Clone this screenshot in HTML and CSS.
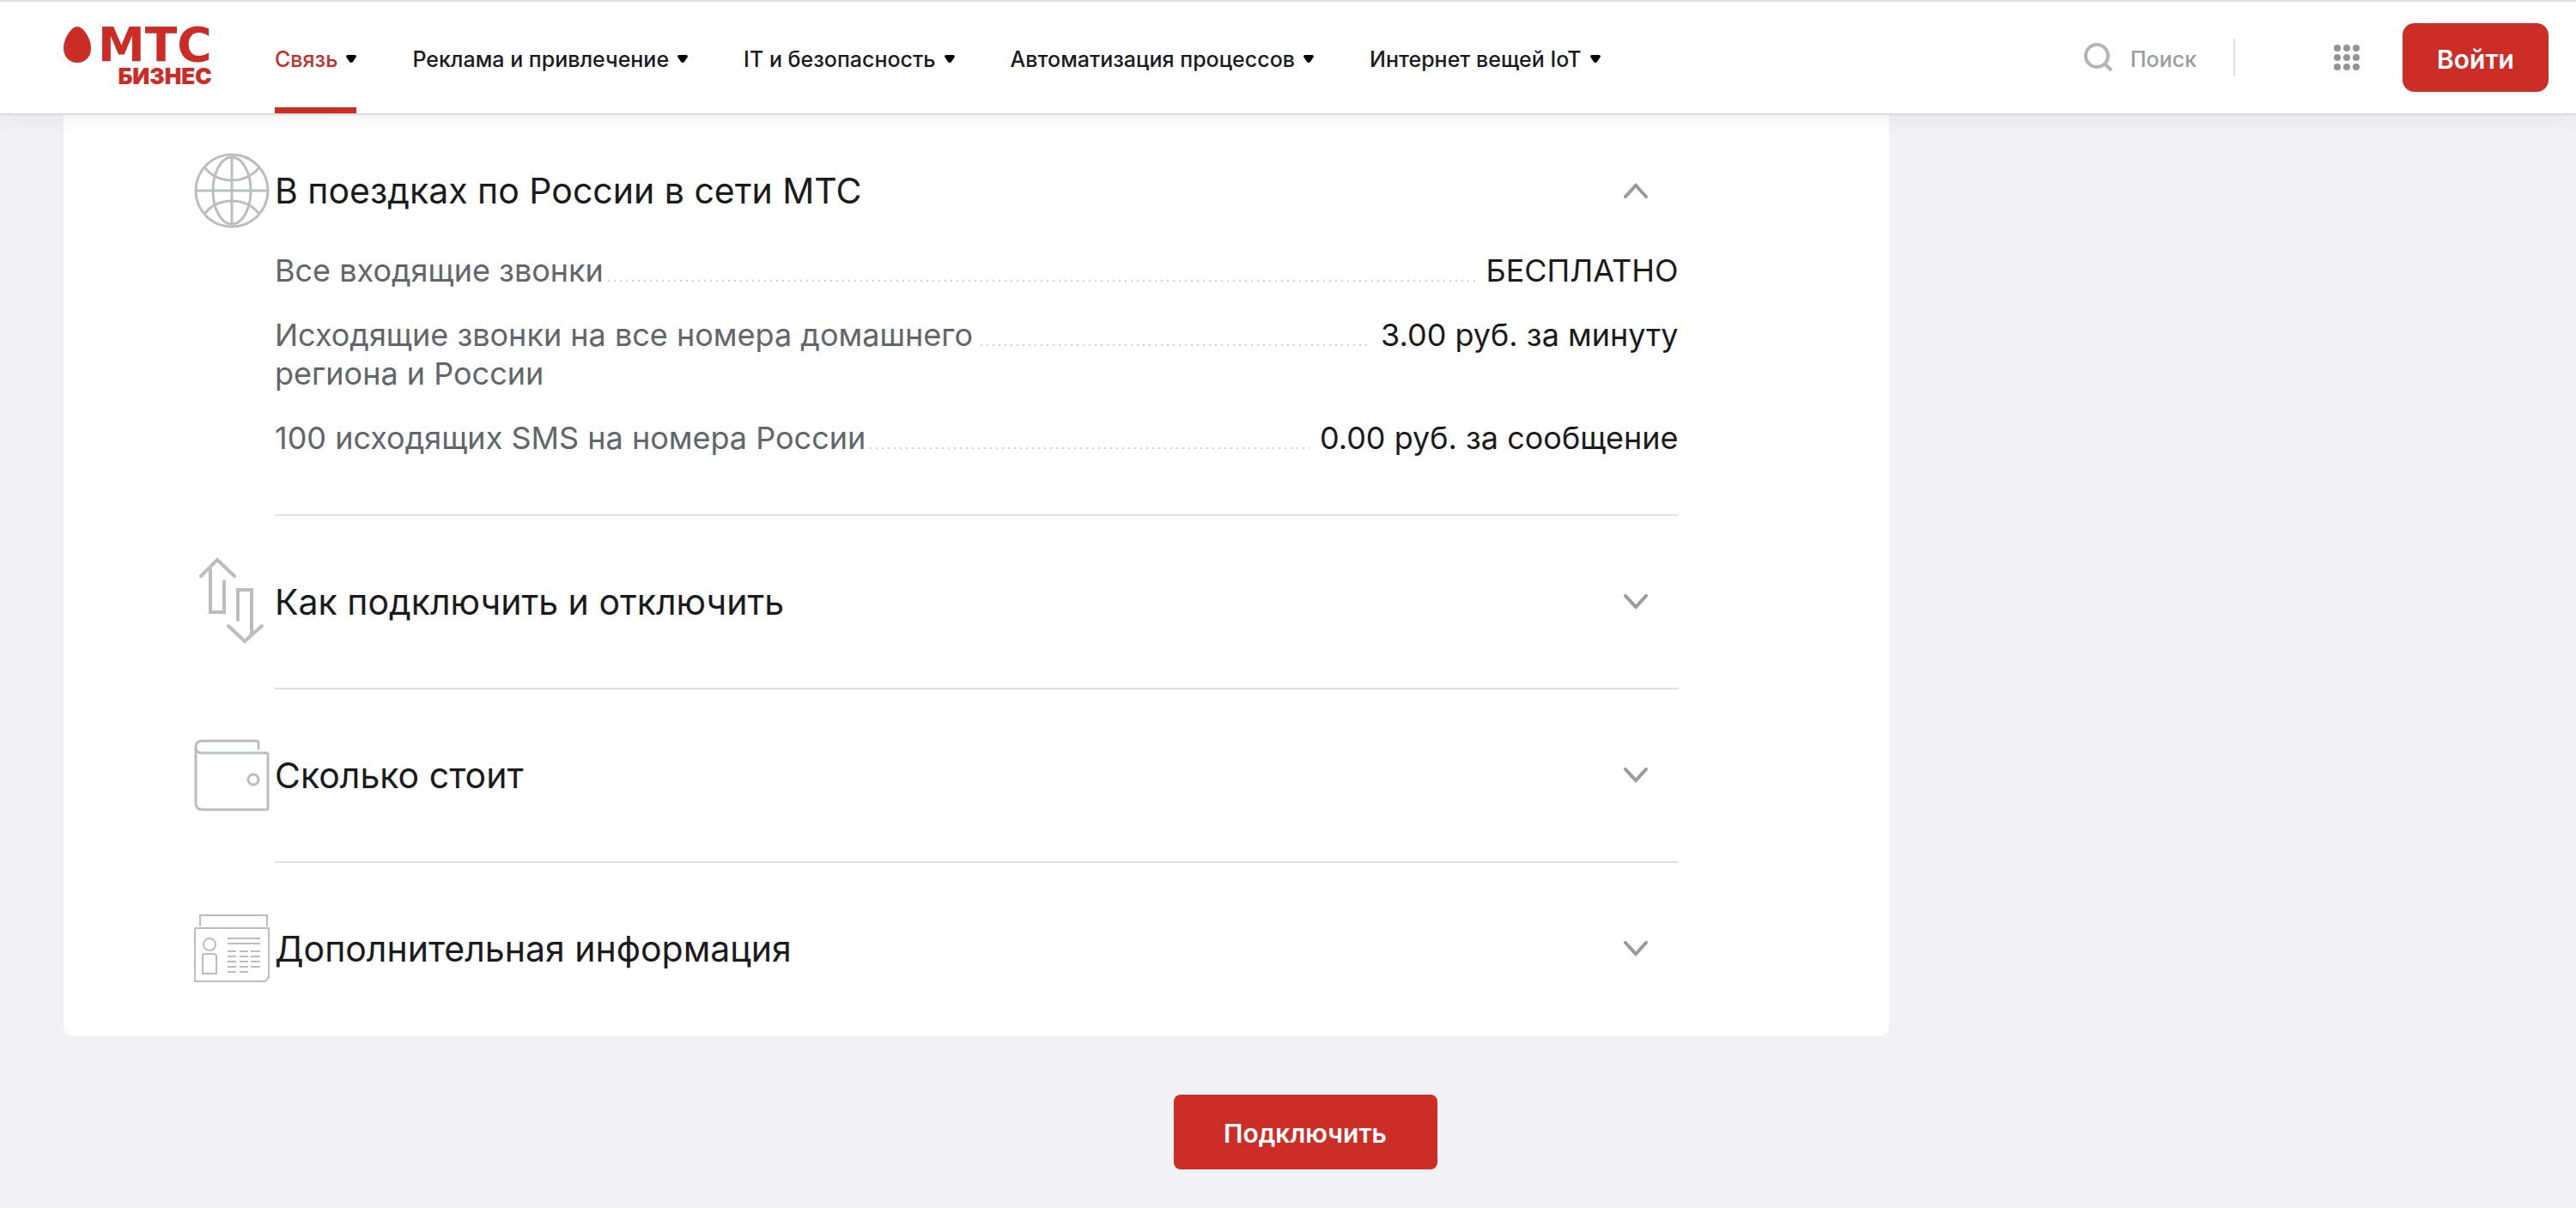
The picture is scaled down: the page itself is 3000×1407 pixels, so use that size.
FILE: index.html
```html
<!DOCTYPE html>
<html lang="ru">
<head>
    <meta charset="UTF-8">
    <meta name="viewport" content="width=device-width, initial-scale=1.0">
    <title>МТС Бизнес</title>
    <link rel="stylesheet" href="styles.css">
</head>
<body>
    <header class="header">
        <a href="#" class="logo">
            <svg class="logo-egg" viewBox="0 0 32 42" aria-hidden="true"><path d="M16 0C23 0 32 14 32 25c0 10-6.500 17-16 17S0 35 0 25C0 14 9 0 16 0z" fill="#cc2c26"/></svg>
            <span class="logo-text">
                <span class="logo-name">МТС</span>
                <span class="logo-sub">БИЗНЕС</span>
            </span>
        </a>
        <nav class="nav">
            <button type="button" class="nav-item active">Связь<svg class="caret" viewBox="0 0 12 9" aria-hidden="true"><path d="M2 0h8q2 0 2 2L8 8q-2 2-4 0L0 2q0-2 2-2z"/></svg></button>
            <button type="button" class="nav-item">Реклама и привлечение<svg class="caret" viewBox="0 0 12 9" aria-hidden="true"><path d="M2 0h8q2 0 2 2L8 8q-2 2-4 0L0 2q0-2 2-2z"/></svg></button>
            <button type="button" class="nav-item">IT и безопасность<svg class="caret" viewBox="0 0 12 9" aria-hidden="true"><path d="M2 0h8q2 0 2 2L8 8q-2 2-4 0L0 2q0-2 2-2z"/></svg></button>
            <button type="button" class="nav-item">Автоматизация процессов<svg class="caret" viewBox="0 0 12 9" aria-hidden="true"><path d="M2 0h8q2 0 2 2L8 8q-2 2-4 0L0 2q0-2 2-2z"/></svg></button>
            <button type="button" class="nav-item">Интернет вещей IoT<svg class="caret" viewBox="0 0 12 9" aria-hidden="true"><path d="M2 0h8q2 0 2 2L8 8q-2 2-4 0L0 2q0-2 2-2z"/></svg></button>
        </nav>
        <div class="tools">
            <label class="search">
                <svg class="search-icon" viewBox="0 0 34 34" aria-hidden="true"><circle cx="15" cy="15" r="13" /><path d="M24 24l8 8"/></svg>
                <input type="search" class="search-input" placeholder="Поиск" aria-label="Поиск">
            </label>
            <button type="button" class="apps" aria-label="Сервисы">
                <svg class="apps-icon" viewBox="0 0 30 30" aria-hidden="true">
                    <circle cx="4" cy="4" r="4"/><circle cx="15" cy="4" r="4"/><circle cx="26" cy="4" r="4"/>
                    <circle cx="4" cy="15" r="4"/><circle cx="15" cy="15" r="4"/><circle cx="26" cy="15" r="4"/>
                    <circle cx="4" cy="26" r="4"/><circle cx="15" cy="26" r="4"/><circle cx="26" cy="26" r="4"/>
                </svg>
            </button>
            <button type="button" class="btn btn-login">Войти</button>
        </div>
    </header>

    <main class="content">
        <div class="card">
            <section class="item open">
                <svg class="item-icon" viewBox="0 0 88 112" aria-hidden="true">
                    <g transform="translate(0 12)">
                        <circle cx="44" cy="44" r="42"/>
                        <ellipse cx="44" cy="44" rx="22" ry="39"/>
                        <path d="M44 5v78M4 44h80M13 18Q25 32 44 32T75 18M13 70Q25 56 44 56T75 70"/>
                    </g>
                </svg>
                <div class="item-body">
                    <button type="button" class="toggle" aria-expanded="true">В поездках по России в сети МТС
                        <svg class="chevron" viewBox="0 0 28 18" aria-hidden="true"><path d="M2 16L14 3l12 13"/></svg>
                    </button>
                    <dl class="rates">
                        <div class="rate">
                            <dt>Все входящие звонки</dt>
                            <dd>БЕСПЛАТНО</dd>
                        </div>
                        <div class="rate">
                            <dt>Исходящие звонки на все номера домашнего региона и России</dt>
                            <dd>3.00 руб. за минуту</dd>
                        </div>
                        <div class="rate">
                            <dt>100 исходящих SMS на номера России</dt>
                            <dd>0.00 руб. за сообщение</dd>
                        </div>
                    </dl>
                </div>
            </section>
            <section class="item">
                <svg class="item-icon bold" viewBox="0 0 88 200" aria-hidden="true">
                    <path d="M8 70L27 51l20 19M19 61v51h16V76M51 121V86h16v52M40 128l19 18 20-18"/>
                </svg>
                <div class="item-body">
                    <button type="button" class="toggle" aria-expanded="false">Как подключить и отключить
                        <svg class="chevron" viewBox="0 0 28 18" aria-hidden="true"><path d="M2 2l12 13L26 2"/></svg>
                    </button>
                </div>
            </section>
            <section class="item">
                <svg class="item-icon" viewBox="0 0 88 200" aria-hidden="true">
                    <path d="M75 69v-7q0-2-2-2H9q-7 0-7 7t7 7h75q2 0 2 2v62q0 2-2 2H10q-8 0-8-8V67"/>
                    <circle cx="69" cy="105" r="6"/>
                </svg>
                <div class="item-body">
                    <button type="button" class="toggle" aria-expanded="false">Сколько стоит
                        <svg class="chevron" viewBox="0 0 28 18" aria-hidden="true"><path d="M2 2l12 13L26 2"/></svg>
                    </button>
                </div>
            </section>
            <section class="item">
                <svg class="item-icon thin" viewBox="0 0 88 200" aria-hidden="true">
                    <path d="M7 74V61h78v13M1 76h86v57l-4 5H1z"/>
                    <circle cx="18" cy="95" r="7"/>
                    <path d="M13 106h10q3 0 3 3v20H10v-20q0-3 3-3z"/>
                    <path d="M39 88h38M39 94h38M39 103h10M53 103h10M66 103h11M39 109h10M53 109h10M66 109h11M39 115h10M53 115h10M66 115h11M39 121h10M53 121h10M66 121h11M39 127h10M53 127h10"/>
                </svg>
                <div class="item-body">
                    <button type="button" class="toggle" aria-expanded="false">Дополнительная информация
                        <svg class="chevron" viewBox="0 0 28 18" aria-hidden="true"><path d="M2 2l12 13L26 2"/></svg>
                    </button>
                </div>
            </section>
        </div>
        <button type="button" class="btn btn-connect">Подключить</button>
    </main>
</body>
</html>
```
FILE: styles.css
```css
* {
    box-sizing: border-box;
}
body {
    margin: 0;
    background: #f2f2f6;
    color: #1b1b1e;
    font-family: Inter, "Liberation Sans", sans-serif;
}
button {
    font-family: inherit;
    border: 0;
    padding: 0;
    background: none;
    color: inherit;
    cursor: pointer;
}
.header {
    position: relative;
    display: flex;
    align-items: center;
    height: 134px;
    padding: 0 32px 0 74px;
    background: #fff;
    border-top: 2px solid #dcdcdc;
    border-bottom: 2px solid #dcdcdf;
    box-shadow: 0 4px 24px rgba(0, 0, 0, 0.06);
}
.logo {
    display: flex;
    align-items: flex-start;
    gap: 8px;
    width: 246px;
    padding-top: 2px;
    color: #cc2c26;
    text-decoration: none;
}
.logo-egg {
    width: 32px;
    height: 42px;
}
.logo-text {
    display: flex;
    flex-direction: column;
    align-items: flex-end;
}
.logo-name {
    font: bold 55px/42px "DejaVu Sans", sans-serif;
}
.logo-sub {
    font-size: 26px;
    line-height: 32px;
    font-weight: 900;
}
.nav {
    display: flex;
    gap: 65px;
    height: 100%;
}
.nav-item {
    display: flex;
    align-items: center;
    gap: 10px;
    font-size: 25px;
    font-weight: 500;
    white-space: nowrap;
    border-top: 10px solid transparent;
    border-bottom: 7px solid transparent;
}
.nav-item.active {
    color: #c22f2b;
    border-bottom-color: #cc2c26;
}
.caret {
    width: 12px;
    height: 9px;
    fill: #000;
}
.tools {
    display: flex;
    align-items: center;
    margin-left: auto;
}
.search {
    display: flex;
    align-items: center;
    gap: 20px;
    height: 44px;
    width: 176px;
    border-right: 2px solid #dedede;
}
.search-icon {
    flex: none;
    width: 34px;
    height: 34px;
    fill: none;
    stroke: #b4b4b4;
    stroke-width: 4;
}
.search-input {
    width: 100px;
    padding: 4px 0 0;
    border: 0;
    outline: 0;
    background: none;
    font: 500 25px Inter, "Liberation Sans", sans-serif;
}
.search-input::placeholder {
    color: #9b9c9e;
    opacity: 1;
}
.apps {
    display: flex;
    margin: 0 50px 0 115px;
}
.apps-icon {
    width: 30px;
    height: 30px;
    fill: #919499;
}
.btn {
    background: #cd2d27;
    color: #fff;
    font-size: 30px;
    font-weight: 600;
}
.btn-login {
    width: 170px;
    height: 80px;
    padding-top: 3px;
    border-radius: 14px;
}
.content {
    display: flex;
    flex-direction: column;
    align-items: center;
    gap: 68px;
    padding: 0 34px 45px 74px;
}
.card {
    align-self: flex-start;
    width: 73.5%;
    padding: 32px 245px 2px 152px;
    background: #fff;
    border-radius: 0 0 12px 12px;
}
.item {
    display: flex;
    gap: 6px;
}
.item-icon {
    flex: none;
    width: 88px;
    height: 200px;
    fill: none;
    stroke: #bcbdbe;
    stroke-width: 3;
    stroke-linecap: round;
}
.item-icon.bold {
    stroke-width: 4;
}
.item-icon.thin {
    stroke-width: 2;
    stroke-linecap: butt;
}
.item-body {
    flex: 1;
    border-bottom: 2px solid #dfdfe1;
}
.item:last-child .item-body {
    border-bottom: 0;
}
.toggle {
    display: flex;
    align-items: center;
    justify-content: space-between;
    width: 100%;
    height: 200px;
    padding-right: 36px;
    font-size: 41px;
    text-align: left;
}
.open .toggle,
.open .item-icon {
    height: 112px;
}
.chevron {
    width: 28px;
    height: 18px;
    fill: none;
    stroke: #9a9a9c;
    stroke-width: 4;
    stroke-linecap: round;
}
.rates {
    display: flex;
    flex-direction: column;
    gap: 30px;
    margin: 0;
    padding: 15px 0 66px;
    font-size: 36px;
    line-height: 45px;
}
.rate {
    display: flex;
    align-items: flex-start;
}
/* dotted leader between the name and the price */
.rate::before {
    content: "";
    order: 1;
    flex: 1;
    height: 2px;
    margin: 33px 12px 0 5px;
    background: repeating-linear-gradient(to right, #cfcfcf 0 2px, transparent 2px 7px);
}
.rate dt {
    max-width: 50%;
    color: #626569;
}
.rate dd {
    order: 2;
    margin: 0;
}
.btn-connect {
    width: 307px;
    height: 87px;
    padding-top: 3px;
    border-radius: 8px;
}
```
